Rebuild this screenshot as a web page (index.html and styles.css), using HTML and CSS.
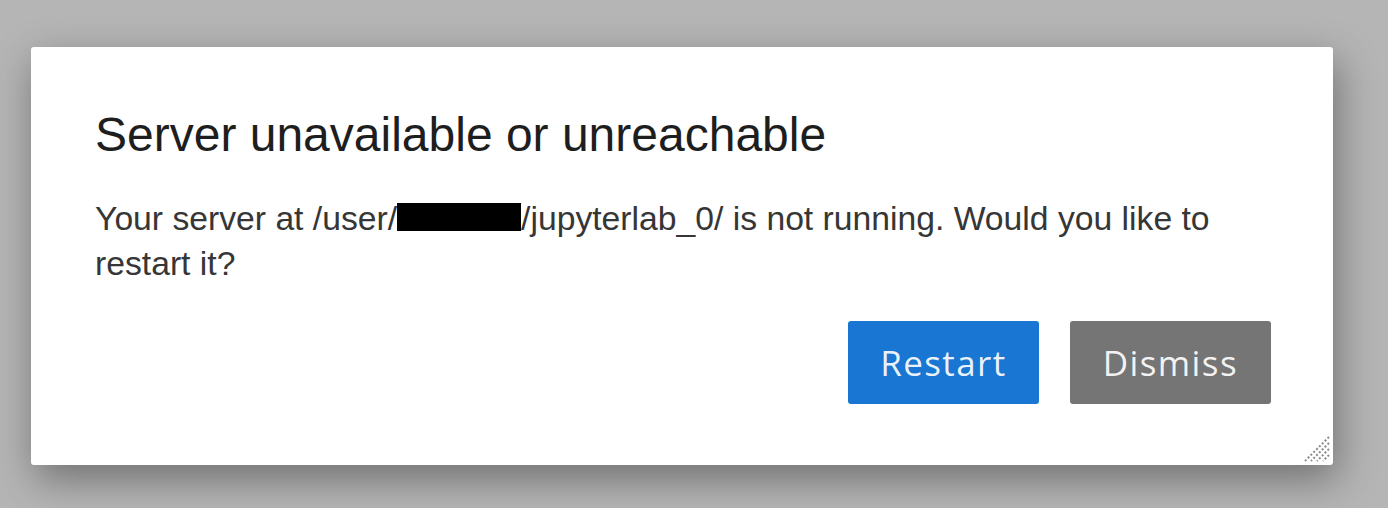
FILE: index.html
```html
<!DOCTYPE html>
<html>

<head>
    <title>Server unavailable</title>
    <link rel="stylesheet" href="styles.css">
</head>

<body>
    <div class="dialog">
        <h1 class="dialog-title">Server unavailable or unreachable</h1>
        <p class="dialog-body">Your server at /user/<span class="redacted"></span>/jupyterlab_0/ is not running. Would you like to restart it?</p>

        <div class="dialog-buttons">
            <button class="btn btn-primary">Restart</button>
            <button class="btn btn-secondary">Dismiss</button>
        </div>

        <!-- resize grip -->
        <svg class="grip" width="28" height="28" viewBox="0 0 28 28">
            <g stroke="#8a8a8a" stroke-width="2" stroke-dasharray="2 2">
                <line x1="26" y1="2" x2="2" y2="26" />
                <line x1="26" y1="8" x2="8" y2="26" />
                <line x1="26" y1="14" x2="14" y2="26" />
                <line x1="26" y1="20" x2="20" y2="26" />
            </g>
        </svg>
    </div>
</body>

</html>
```

FILE: styles.css
```css
body {
    background: #b5b5b5;
    font-family: "Liberation Sans", Arial, sans-serif;
    height: 508px;
    margin: 0;
    overflow: hidden;
    padding: 47px 55px 0 31px;
    box-sizing: border-box;
}

.dialog {
    background: white;
    border-radius: 3px;
    box-shadow: 4px 14px 40px rgba(0, 0, 0, .38);
    box-sizing: border-box;
    height: 418px;
    padding: 52px 64px 0 64px;
    position: relative;
}

.dialog-title {
    color: #1e1e1e;
    font-size: 48px;
    font-weight: normal;
    line-height: 72px;
    margin: 0;
}

.dialog-body {
    color: #363636;
    font-size: 33.7px;
    line-height: 45px;
    margin: 25px 0 0 0;
}

.redacted {
    background: black;
    display: inline-block;
    height: 28px;
    vertical-align: -1px;
    width: 124px;
}

.dialog-buttons {
    display: flex;
    gap: 31px;
    justify-content: flex-end;
    margin-top: 35px;
    margin-right: -2px;
}

.btn {
    border: none;
    border-radius: 3px;
    color: rgba(255, 255, 255, .92);
    cursor: pointer;
    font-family: "Open Sans", sans-serif;
    font-size: 35px;
    height: 83px;
    letter-spacing: 1.4px;
    padding: 0 32px;
}

.btn-primary {
    background: #1976d2;
}

.btn-secondary {
    background: #757575;
    padding: 0 33px;
}

.grip {
    bottom: 2px;
    position: absolute;
    right: 2px;
}
```
